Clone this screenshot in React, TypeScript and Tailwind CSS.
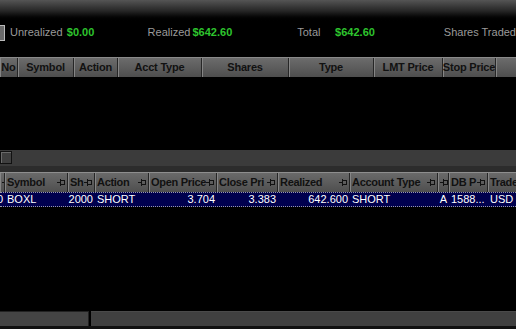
import React from "react";

const font = { fontFamily: '"Liberation Sans", Arial, sans-serif' };

function Pin() {
  return (
    <svg width="9" height="7" viewBox="0 0 9 7" className="shrink-0">
      <line x1="0" y1="3.5" x2="3" y2="3.5" stroke="#111" strokeWidth="1" />
      <rect x="3.5" y="1.5" width="4" height="4" fill="none" stroke="#111" strokeWidth="1" />
      <line x1="3.5" y1="0" x2="3.5" y2="7" stroke="#111" strokeWidth="1" />
    </svg>
  );
}

const topCols: [string, number][] = [
  ["No", 18],
  ["Symbol", 56],
  ["Action", 44],
  ["Acct Type", 84],
  ["Shares", 87],
  ["Type", 85],
  ["LMT Price", 69],
  ["Stop Price", 53],
  ["", 40],
];

const botCols: [string, number, boolean][] = [
  ["", 5, true],
  ["Symbol", 63, true],
  ["Sh", 27, true],
  ["Action", 54, true],
  ["Open Price", 68, true],
  ["Close Pri", 61, true],
  ["Realized", 72, true],
  ["Account Type", 88, true],
  ["", 11, true],
  ["DB P", 39, true],
  ["Trade", 40, false],
];

const row: [string, number, "l" | "r"][] = [
  ["0", 5, "r"],
  ["BOXL", 63, "l"],
  ["2000", 27, "r"],
  ["SHORT", 54, "l"],
  ["3.704", 68, "r"],
  ["3.383", 61, "r"],
  ["642.600", 72, "r"],
  ["SHORT", 88, "l"],
  ["A", 11, "r"],
  ["1588...", 39, "l"],
  ["USD", 40, "l"],
];

export default function App() {
  return (
    <div className="w-[516px] h-[329px] bg-black overflow-hidden flex flex-col text-[11px]" style={font}>
      {/* top gradient */}
      <div className="h-[22px] shrink-0 bg-gradient-to-b from-[#555555] via-[#262626] to-black" />
      {/* stats row */}
      <div className="h-[20px] shrink-0 flex items-center pt-[1px]">
        <div className="w-[5px] h-[16px] bg-[#6a6a6a] border border-[#bbbbbb] border-l-0 mr-[5px]" />
        <span className="text-[#9a9a9a] w-[57px]">Unrealized</span>
        <span className="text-[#2ec42e] font-bold w-[81px]">$0.00</span>
        <span className="text-[#9a9a9a] w-[45px]">Realized</span>
        <span className="text-[#2ec42e] font-bold w-[105px]">$642.60</span>
        <span className="text-[#9a9a9a] w-[38px]">Total</span>
        <span className="text-[#2ec42e] font-bold w-[109px]">$642.60</span>
        <span className="text-[#9a9a9a] whitespace-nowrap">Shares Traded</span>
      </div>
      <div className="h-[15px] shrink-0" />
      {/* top header */}
      <div className="h-[20px] shrink-0 flex border-t border-[#8a8a8a]">
        {topCols.map(([t, w], i) => (
          <div
            key={i}
            style={{ width: w }}
            className="shrink-0 h-full flex items-center justify-center font-bold text-[#111] bg-gradient-to-b from-[#6c6c6c] to-[#4e4e4e] border-r border-[#262626] shadow-[inset_1px_0_0_#858585] whitespace-nowrap overflow-hidden tracking-[-0.2px]"
          >
            {t}
          </div>
        ))}
      </div>
      <div className="h-[73px] shrink-0" />
      {/* middle scrollbar */}
      <div className="h-[16px] shrink-0 bg-[#3b3b3b] flex items-start pt-[1px]">
        <div className="w-[12px] h-[13px] bg-[#3f3f3f] border border-[#111] shadow-[inset_1px_1px_0_#6a6a6a]" />
      </div>
      <div className="h-[6px] shrink-0 bg-[#2c2c2c]" />
      {/* bottom header */}
      <div className="h-[20px] shrink-0 flex border-t border-[#8e8e8e] bg-[#4e4e4e]">
        {botCols.map(([t, w, pin], i) => (
          <div
            key={i}
            style={{ width: w }}
            className="shrink-0 h-full flex items-center pl-[2px] pr-[1px] font-bold text-[#111] bg-gradient-to-b from-[#6a6a6a] to-[#4f4f4f] border-r border-[#262626] shadow-[inset_1px_0_0_#858585] whitespace-nowrap overflow-hidden text-[11px] tracking-[-0.3px]"
          >
            <span className="flex-1 min-w-0 overflow-hidden">{t}</span>
            {pin && <Pin />}
          </div>
        ))}
      </div>
      {/* data row */}
      <div className="h-[15px] shrink-0 flex bg-[#00004e] border-y border-dotted border-[#9a9aa8] text-white text-[11px]">
        {row.map(([t, w, a], i) => (
          <div
            key={i}
            style={{ width: w }}
            className={`shrink-0 h-full flex items-center px-[2px] whitespace-nowrap overflow-hidden ${a === "r" ? "justify-end" : "justify-start"}`}
          >
            {t}
          </div>
        ))}
      </div>
      <div className="flex-1" />
      {/* bottom scrollbar */}
      <div className="h-[15px] shrink-0 flex">
        <div className="w-[89px] h-full bg-[#444444] border-t border-[#6e6e6e] border-r border-[#222]" />
        <div className="w-[2px] h-full bg-black" />
        <div className="flex-1 h-full bg-[#404040] border-t border-[#4a4a4a]" />
      </div>
      <div className="h-[3px] shrink-0 bg-[#111]" />
    </div>
  );
}
